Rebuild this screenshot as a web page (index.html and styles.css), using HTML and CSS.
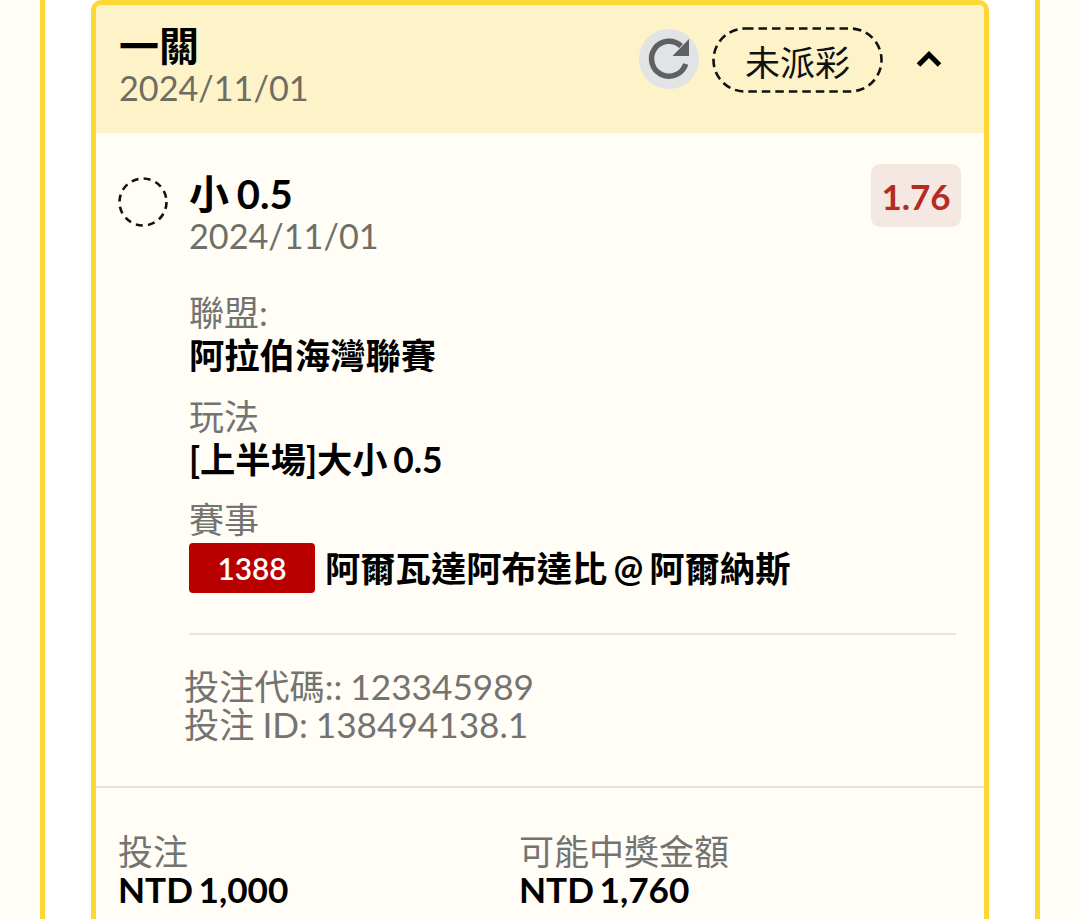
FILE: index.html
```html
<!DOCTYPE html>
<html lang="zh-Hant">
<head>
<meta charset="utf-8">
<title>一關</title>
<link rel="stylesheet" href="styles.css">
</head>
<body>
<main class="panel">
  <section class="card">
    <header class="card-head">
      <div class="head-text">
        <div class="title">一關</div>
        <div class="date">2024/11/01</div>
      </div>
      <div class="head-actions">
        <button class="refresh" aria-label="refresh">
          <svg viewBox="0 0 60 60" width="60" height="60"><path class="refresh-arc" d="M42 17 A17.5 17.5 0 1 0 46.7 35"/><path class="refresh-tip" d="M50 10 V27 H33.5 Z"/></svg>
        </button>
        <span class="status">
          <svg class="status-ring" viewBox="0 0 171 66" width="171" height="66"><rect x="1.5" y="1.5" width="168" height="63" rx="31.5" ry="31.5"/></svg>
          未派彩
        </span>
        <svg class="chev" viewBox="0 0 26 18" width="26" height="18"><path d="M2.5 15 L13 4.5 L23.5 15"/></svg>
      </div>
    </header>
    <div class="bet">
      <div class="bet-top">
        <svg class="dash-circle" viewBox="0 0 50 50" width="50" height="50"><circle cx="25" cy="25" r="23.5"/></svg>
        <div class="bet-name">
          <div class="name">小 0.5</div>
          <div class="date">2024/11/01</div>
        </div>
        <span class="odds">1.76</span>
      </div>
      <div class="details">
        <div class="field">
          <div class="label">聯盟:</div>
          <div class="value">阿拉伯海灣聯賽</div>
        </div>
        <div class="field">
          <div class="label">玩法</div>
          <div class="value">[上半場]大小 0.5</div>
        </div>
        <div class="field">
          <div class="label">賽事</div>
          <div class="value match"><span class="code">1388</span>阿爾瓦達阿布達比 @ 阿爾納斯</div>
        </div>
      </div>
      <div class="ids">
        <div>投注代碼:: 123345989</div>
        <div>投注 ID: 138494138.1</div>
      </div>
    </div>
    <div class="totals">
      <div class="total">
        <div class="label">投注</div>
        <div class="value">NTD 1,000</div>
      </div>
      <div class="total">
        <div class="label">可能中獎金額</div>
        <div class="value">NTD 1,760</div>
      </div>
    </div>
  </section>
</main>
</body>
</html>
```
FILE: styles.css
```css
* { box-sizing: border-box; }
html, body { margin: 0; height: 919px; overflow: hidden; }
body {
  background: #fffdf5;
  font-family: Lato, "Noto Sans CJK TC", sans-serif;
  padding: 0 40px;
}
.panel {
  height: 919px;
  overflow: hidden;
  background: #fff;
  border: solid #fdd835;
  border-width: 0 5px;
  padding: 0 46px;
}
.card {
  height: 1000px;
  background: #fffdf5;
  border: 5px solid #fdd835;
  border-radius: 10px;
}
.card-head {
  height: 128px;
  background: #fef2c9;
  padding: 18px 23px 0 23px;
  display: flex;
  justify-content: space-between;
  border-radius: 5px 5px 0 0;
}
.title { font-size: 40px; font-weight: 700; line-height: 47px; color: #000; }
.date { font-size: 34.2px; line-height: 36px; color: #6f6c60; }
.head-actions { display: flex; align-items: center; height: 72px; margin-right: 19px; }
.refresh {
  width: 60px; height: 60px; padding: 0; border: 0;
  border-radius: 50%; background: #e2e3e5; display: block;
  margin-right: 13px;
}
.refresh svg { display: block; }
.refresh-arc { fill: none; stroke: #5f6062; stroke-width: 5.5; }
.refresh-tip { fill: #5f6062; }
.status {
  position: relative;
  width: 171px; height: 66px;
  margin-top: 2px;
  display: flex; align-items: center; justify-content: center;
  font-size: 35px; color: #111;
}
.status-ring { position: absolute; inset: 0; }
.status-ring rect { fill: none; stroke: #111; stroke-width: 2.6; stroke-dasharray: 8.5 5; }
.chev { margin-left: 33px; }
.chev path { fill: none; stroke: #000; stroke-width: 5; }
.bet { padding: 31px 23px 0 22px; }
.bet-top { display: flex; align-items: flex-start; }
.dash-circle { flex: none; margin-top: 13px; margin-right: 21px; }
.dash-circle circle { fill: none; stroke: #111; stroke-width: 2.6; stroke-dasharray: 7 5.3; }
.bet-name { flex: 1; }
.name { font-size: 40px; font-weight: 700; line-height: 46px; color: #000; padding-top: 7px; word-spacing: -2px; }
.bet-name .date { color: #6f6f68; line-height: 38px; }
.odds {
  width: 90px; height: 63px; background: #f5e7e1; border-radius: 9px;
  color: #b52b22; font-size: 35px; font-weight: 700;
  display: flex; align-items: center; justify-content: center;
}
.details { padding: 37px 0 0 71px; }
.field { margin-bottom: 19.5px; }
.field:last-child { margin-bottom: 0; }
.label { font-size: 35px; line-height: 40px; color: #737371; }
.value { font-size: 35.3px; font-weight: 700; line-height: 41px; color: #000; margin-top: 3px; word-spacing: -3px; }
.match { display: flex; align-items: center; height: 50px; margin-top: 4px; word-spacing: -2.5px; }
.code {
  width: 126px; height: 50px; border-radius: 4px; background: #b90000;
  color: #fff; font-weight: 600; font-size: 29.8px;
  display: flex; align-items: center; justify-content: center;
  margin-right: 10px;
}
.ids {
  margin: 40px 5px 0 66px;
  font-size: 35.2px; line-height: 38px; color: #737371; word-spacing: -1px;
}
.ids::before {
  content: ""; display: block; height: 2px; background: #e5e4df;
  margin: 0 0 32px 5px;
}
.totals {
  margin-top: 43px;
  border-top: 2px solid #e5e4df;
  padding: 44px 23px 0 22px;
  display: grid;
  grid-template-columns: 401px 1fr;
}
.total .label { line-height: 38px; }
.total .value { line-height: 38px; margin-top: 0; font-size: 35.2px; word-spacing: -3px; }
```
